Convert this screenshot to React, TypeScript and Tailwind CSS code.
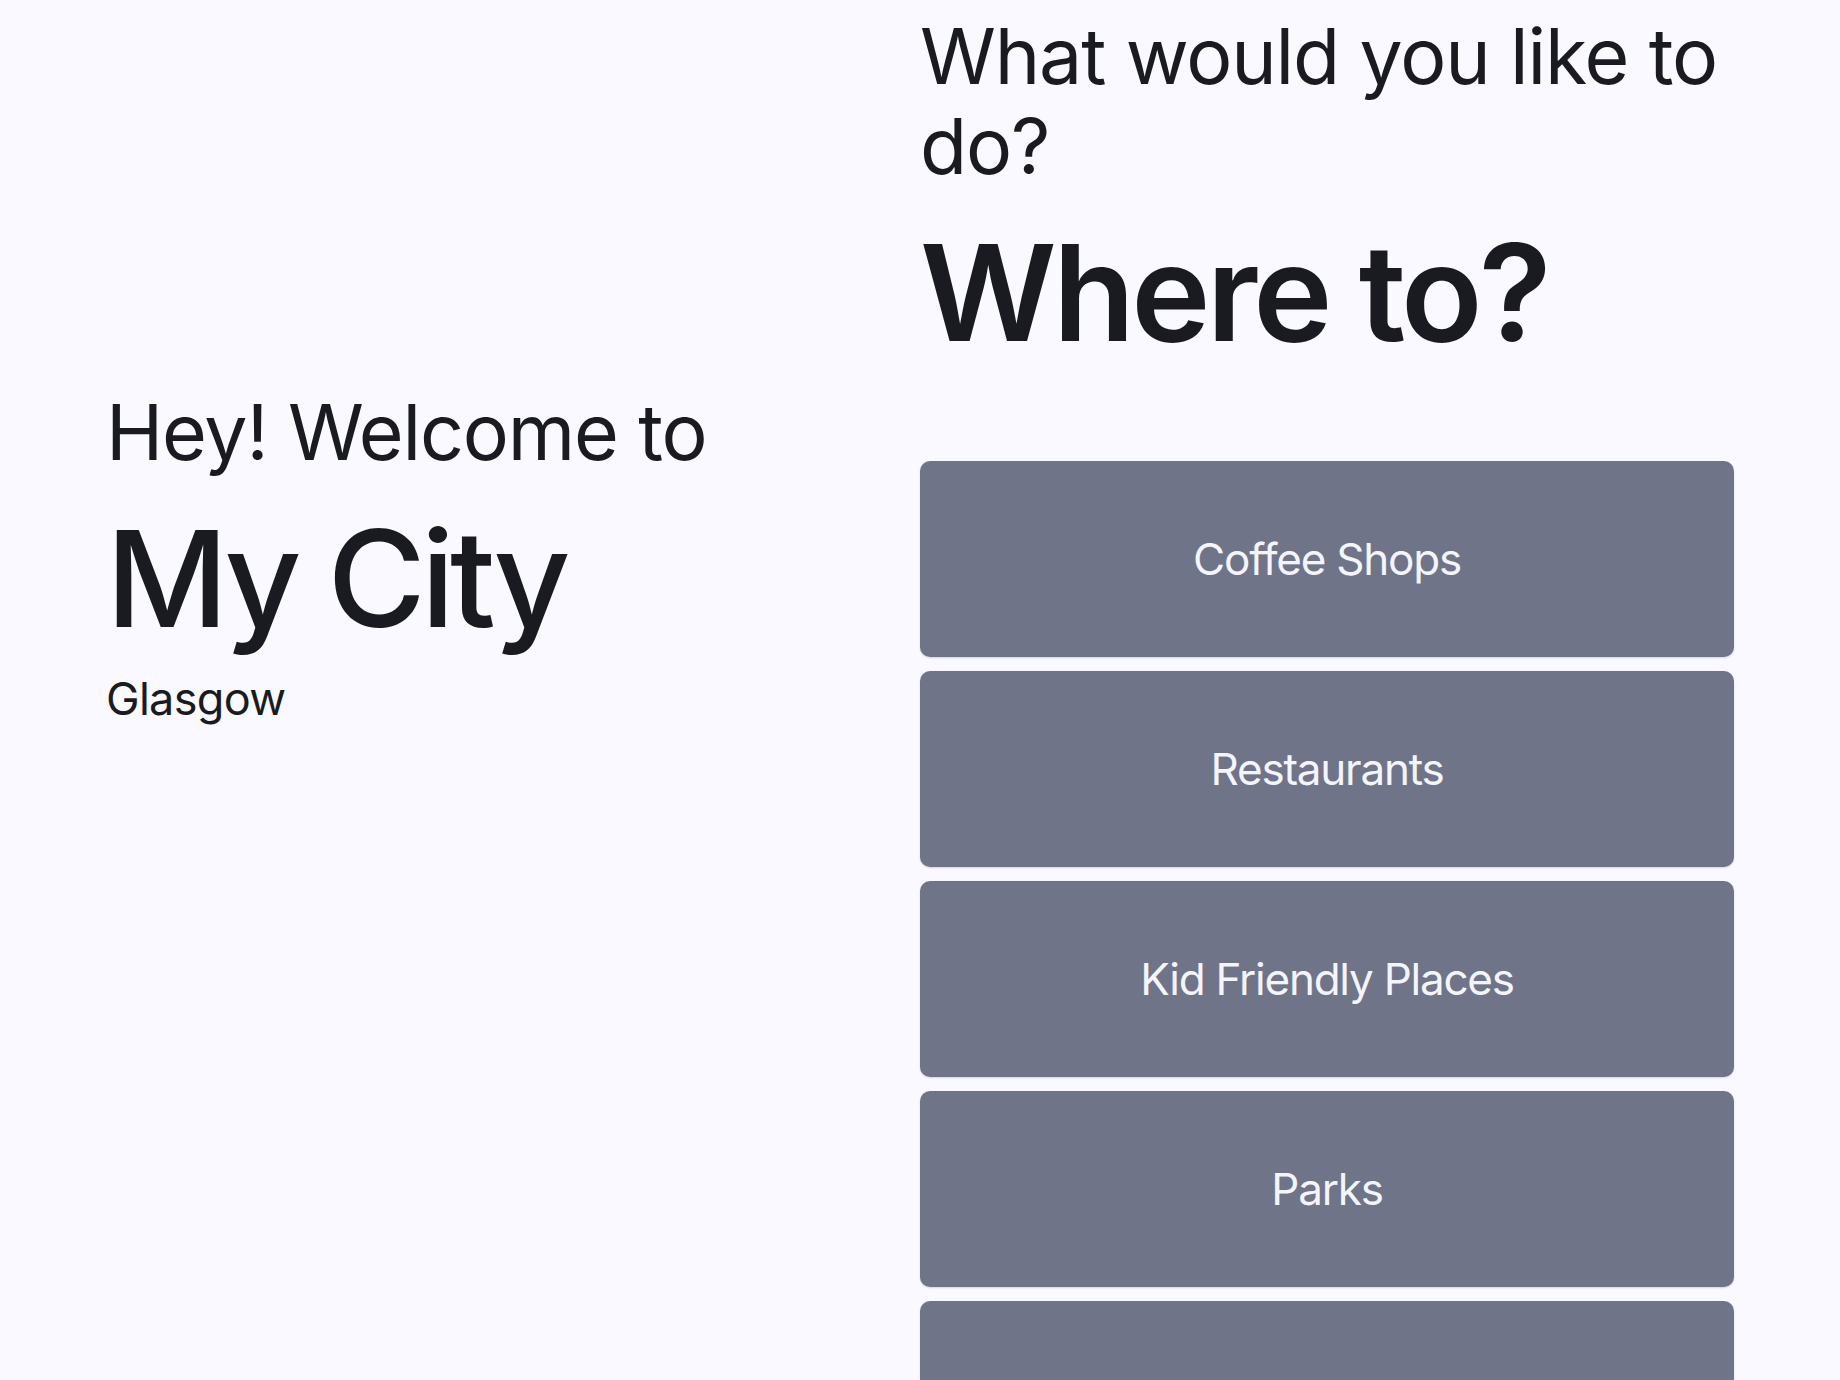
const places = ['Coffee Shops', 'Restaurants', 'Kid Friendly Places', 'Parks'];

export default function App() {
  return (
    <div className="h-[1380px] w-full overflow-hidden bg-[#f9f9ff] text-[#1a1b21] font-['Inter',sans-serif]">
      <div className="grid grid-cols-2 px-[106px]">
        {/* Left: welcome */}
        <div className="flex flex-col pt-[387px]">
          <p className="text-[77px] leading-[90px] tracking-[-0.015em]">Hey! Welcome to</p>
          <h1 className="mt-[26px] text-[134px] leading-[150px] font-medium tracking-[-0.036em]">My City</h1>
          <p className="mt-[19px] text-[45px] leading-[54px] tracking-[-0.015em]">Glasgow</p>
        </div>

        {/* Right: categories */}
        <div className="flex flex-col pt-[11px]">
          <p className="text-[77px] leading-[90px] tracking-[-0.015em]">What would you like to do?</p>
          <h2 className="mt-[26px] text-[134px] leading-[150px] font-semibold tracking-[-0.028em]">Where to?</h2>
          <div className="mt-[94px] flex flex-col gap-[14px]">
            {places.map((p) => (
              <button
                key={p}
                className="flex h-[196px] items-center justify-center rounded-[10px] bg-[#6f7489] text-[44px] tracking-[-0.028em] text-[#f4f4fb] shadow-[0_1px_2px_rgba(0,0,0,0.15)]"
              >
                {p}
              </button>
            ))}
            <button
              aria-label="More"
              className="h-[196px] rounded-[10px] bg-[#6f7489] shadow-[0_1px_2px_rgba(0,0,0,0.15)]"
            />
          </div>
        </div>
      </div>
    </div>
  );
}
